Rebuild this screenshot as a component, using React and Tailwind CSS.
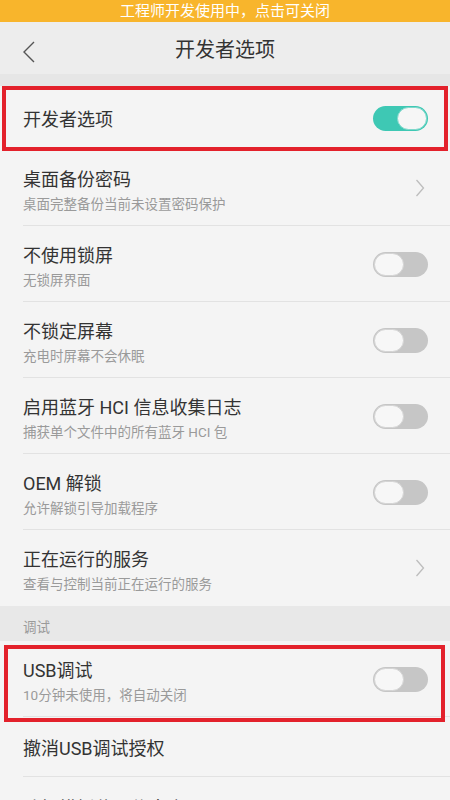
import React from "react";

const font = { fontFamily: 'Roboto, "Noto Sans CJK SC", sans-serif' };

function Toggle({ on }) {
  if (on) {
    return (
      <div className="w-[55px] h-[25px] rounded-full bg-[#3ec8b4] flex items-center justify-end pr-[1px]">
        <div className="w-[30px] h-[23px] rounded-full bg-[#f6f6f6] border border-[#7fd8cb]" />
      </div>
    );
  }
  return (
    <div className="w-[55px] h-[25px] rounded-full bg-[#c6c6c6] flex items-center justify-start pl-[1px]">
      <div className="w-[30px] h-[23px] rounded-full bg-[#f7f7f7] border border-[#d4d4d4]" />
    </div>
  );
}

function Chevron() {
  return (
    <svg width="10" height="18" viewBox="0 0 10 18" className="mr-[3px]">
      <path d="M1.5 1 L8.5 9 L1.5 17" fill="none" stroke="#bdbdbd" strokeWidth="1.3" />
    </svg>
  );
}

function Row({ title, sub, right, divider = true, h = "h-[76px]" }) {
  return (
    <div className={`relative ${h} pl-[23px] pr-[22px] flex items-center`}>
      <div className={`flex-1 flex flex-col ${sub ? "pt-[5px]" : "pt-[3px]"}`}>
        <div className="text-[18px] leading-[24px] text-[#333333]">{title}</div>
        {sub && <div className="text-[13.5px] leading-[18px] mt-[3px] text-[#9a9a9a]">{sub}</div>}
      </div>
      {right}
      {divider && <div className="absolute left-[23px] right-0 bottom-0 h-px bg-[#e2e2e2]" />}
    </div>
  );
}

export default function App() {
  return (
    <div style={font} className="w-[450px] h-[800px] overflow-hidden bg-[#f4f4f4]">
      <div className="h-[22px] bg-[#f8b52c] flex items-center justify-center text-white text-[15px]">
        工程师开发使用中，点击可关闭
      </div>
      <div className="relative h-[52px] bg-[#ededed] flex items-center justify-center pt-[4px]">
        <svg width="14" height="22" viewBox="0 0 14 22" className="absolute left-[22px] top-[19px]">
          <path d="M12 1 L2 11 L12 21" fill="none" stroke="#555" strokeWidth="1.4" />
        </svg>
        <div className="text-[20px] text-[#333333]">开发者选项</div>
      </div>
      <div className="h-[12px] bg-[#e6e6e6]" />
      <div className="relative">
        <Row title="开发者选项" h="h-[64px]" divider={false} right={<Toggle on />} />
        <div className="absolute left-[2px] right-[2px] top-0 bottom-[-1px] border-[4px] border-[#e3212b]" />
      </div>
      <Row title="桌面备份密码" sub="桌面完整备份当前未设置密码保护" right={<Chevron />} />
      <Row title="不使用锁屏" sub="无锁屏界面" right={<Toggle />} />
      <Row title="不锁定屏幕" sub="充电时屏幕不会休眠" right={<Toggle />} />
      <Row title="启用蓝牙 HCI 信息收集日志" sub="捕获单个文件中的所有蓝牙 HCI 包" right={<Toggle />} />
      <Row title="OEM 解锁" sub="允许解锁引导加载程序" right={<Toggle />} />
      <Row title="正在运行的服务" sub="查看与控制当前正在运行的服务" right={<Chevron />} divider={false} />
      <div className="h-[35px] bg-[#e8e8e8] pl-[23px] pt-[8px] flex items-center text-[13.5px] text-[#9a9a9a]">调试</div>
      <div className="relative">
        <Row title="USB调试" sub="10分钟未使用，将自动关闭" right={<Toggle />} />
        <div className="absolute left-[4px] right-[5px] top-[4px] bottom-[-5px] border-[4px] border-[#e3212b]" />
      </div>
      <Row title="撤消USB调试授权" h="h-[60px]" />
      <Row title="选择模拟位置信息应用" h="h-[60px]" divider={false} />
    </div>
  );
}
